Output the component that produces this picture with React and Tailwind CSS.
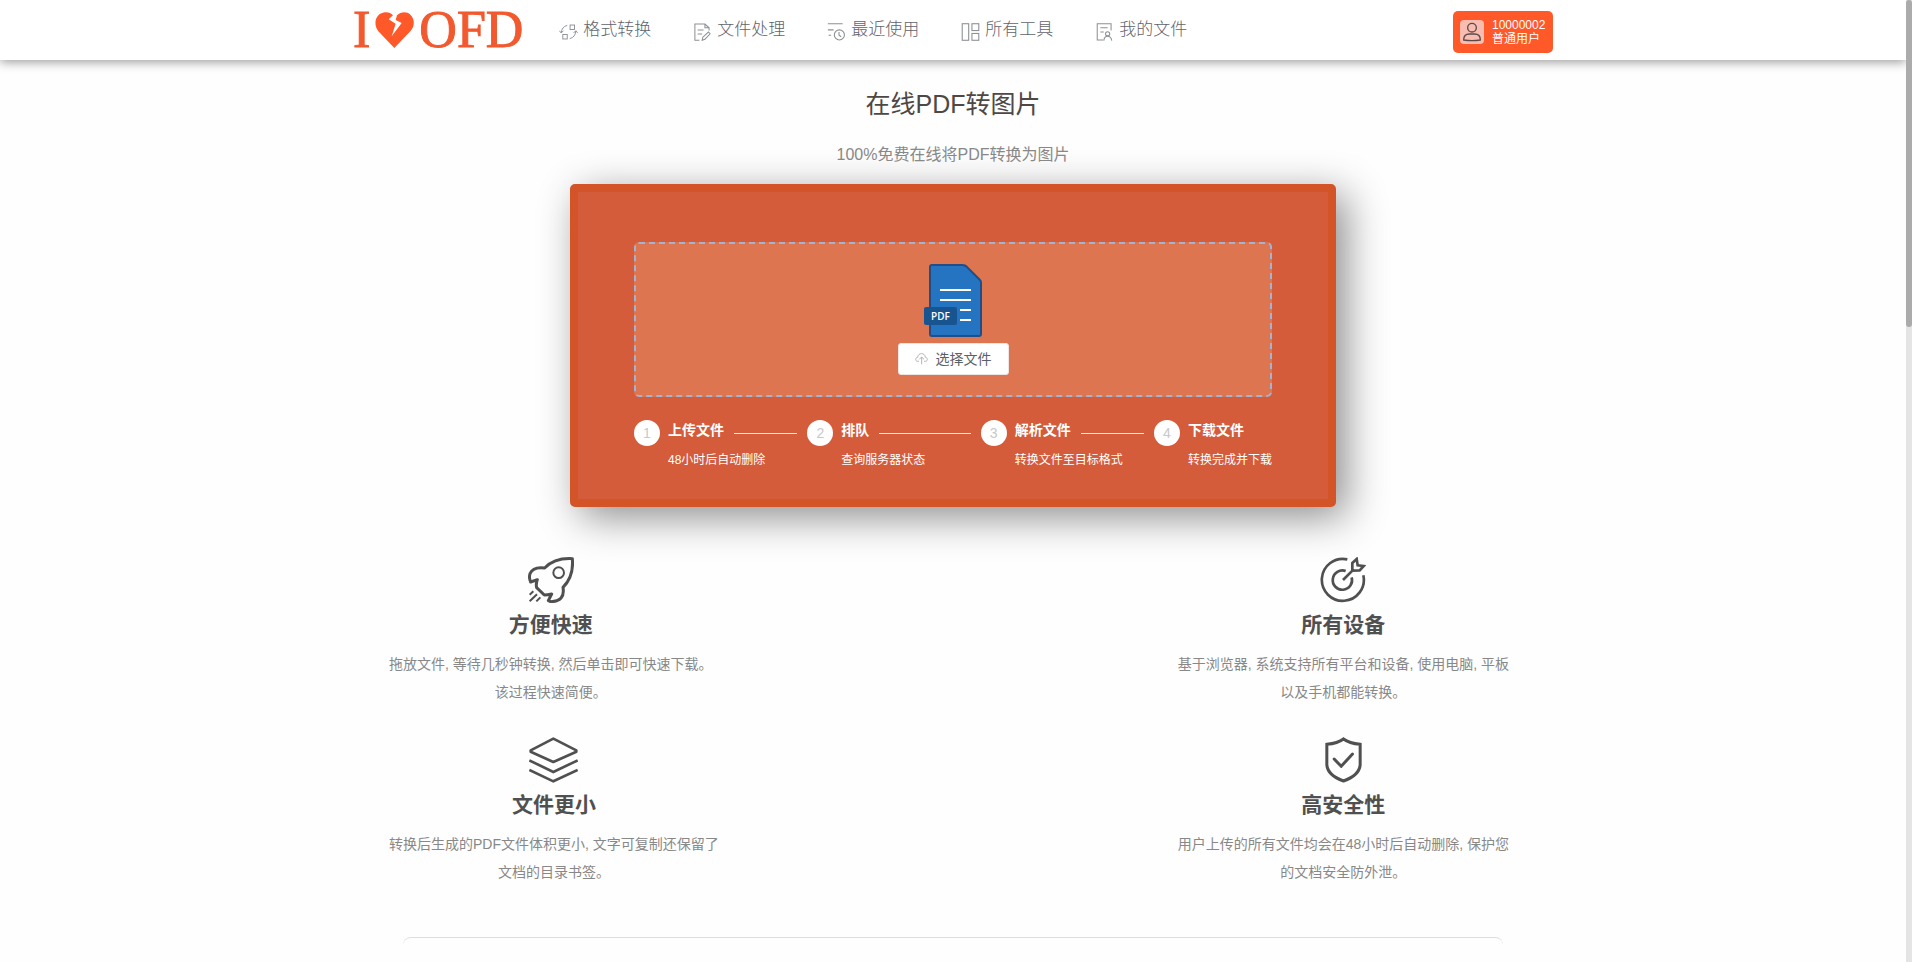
import React from 'react';

const navItems = [
  {
    label: '格式转换',
    viewBox: '-2 0 60 50',
    icon: (
      <>
        <rect x="33" y="3" width="14" height="14" />
        <rect x="10" y="33" width="14" height="14" />
        <path d="M24 4 Q6 9 5 28 M-1 21 L5 28 L12 21" />
        <path d="M32 46 Q50 41 51 22 M44 28 L51 21 L57 28" />
      </>
    ),
  },
  {
    label: '文件处理',
    viewBox: '0 0 50 52',
    icon: (
      <>
        <path d="M16 50 H3 V3 H32 L44 14 V22 M32 3 V14 H44" />
        <path d="M11 20 H28 M11 32 H24" />
        <path d="M24 50 L26 41 L42 26 L47 31 L32 47 Z" />
      </>
    ),
  },
  {
    label: '最近使用',
    viewBox: '0 0 50 50',
    icon: (
      <>
        <path d="M1 2 H42 M1 19 H17 M3 34 H10" />
        <circle cx="33" cy="33" r="14" />
        <path d="M32 25 V34 L38 38" />
      </>
    ),
  },
  {
    label: '所有工具',
    viewBox: '0 0 50 50',
    icon: (
      <>
        <rect x="2" y="2" width="18" height="46" />
        <rect x="29" y="2" width="19" height="19" />
        <rect x="29" y="29" width="19" height="19" />
      </>
    ),
  },
  {
    label: '我的文件',
    viewBox: '-2 0 50 52',
    icon: (
      <>
        <path d="M19 49 H2 V2 H42 V22" />
        <path d="M11 14 H32 M11 26 H21" />
        <circle cx="32" cy="31" r="6" />
        <path d="M21 51 Q22 38 32 38 Q42 38 44 51" />
      </>
    ),
  },
];

const steps = [
  { title: '上传文件', desc: '48小时后自动删除' },
  { title: '排队', desc: '查询服务器状态' },
  { title: '解析文件', desc: '转换文件至目标格式' },
  { title: '下载文件', desc: '转换完成并下载' },
];

const RocketIcon = () => (
  <svg className="h-[46px] w-[46px]" viewBox="0 0 138 138" fill="none" stroke="currentColor" strokeWidth="9">
    <path
      strokeLinejoin="round"
      d="M50 33 Q80 2 133 5 Q138 58 105 91 Q112 134 68 134 L61 131 L71 111 Q58 114 49 114 L26 92 Q23 80 28 68 L8 75 Q2 62 6 50 Q16 28 50 33 Z"
    />
    <circle cx="92" cy="47" r="16" strokeWidth="6" />
    <path strokeWidth="6" d="M16 103 L5 113 M27 112 L5 133 M37 121 L25 133" />
  </svg>
);

const LayersIcon = () => (
  <svg className="h-[46px] w-[49px]" viewBox="0 0 147 138" fill="none" stroke="currentColor" strokeWidth="8">
    <path strokeLinejoin="round" d="M73 5 L142 40 V44 L73 75 L5 44 V40 Z" />
    <path d="M1 70 L73 105 L146 70 M1 99 L73 133 L146 99" />
  </svg>
);

const TargetIcon = () => (
  <svg className="h-[46px] w-[46px]" viewBox="0 0 138 138" fill="none" stroke="currentColor" strokeWidth="8">
    <path d="M82 7 A63 63 0 1 0 130 55" />
    <path d="M77 42 A29 29 0 1 0 95 61" />
    <path d="M69 69 L101 37" />
    <path d="M97 18 L110 6 L113 25 L131 27 L119 40 L97 41 Z" />
  </svg>
);

const ShieldIcon = () => (
  <svg className="h-[46px] w-[37px]" viewBox="0 0 110 138" fill="none" stroke="currentColor" strokeWidth="9">
    <path d="M55 6 Q38 19 5 22 V84 Q8 115 55 132 Q102 115 105 84 V22 Q72 19 55 6 Z" />
    <path strokeLinecap="round" strokeLinejoin="round" d="M27 66 L48 88 L82 51" />
  </svg>
);

const leftFeatures = [
  {
    title: '方便快速',
    Icon: RocketIcon,
    lines: ['拖放文件, 等待几秒钟转换, 然后单击即可快速下载。', '该过程快速简便。'],
  },
  {
    title: '文件更小',
    Icon: LayersIcon,
    lines: ['转换后生成的PDF文件体积更小, 文字可复制还保留了', '文档的目录书签。'],
  },
];

const rightFeatures = [
  {
    title: '所有设备',
    Icon: TargetIcon,
    lines: ['基于浏览器, 系统支持所有平台和设备, 使用电脑, 平板', '以及手机都能转换。'],
  },
  {
    title: '高安全性',
    Icon: ShieldIcon,
    lines: ['用户上传的所有文件均会在48小时后自动删除, 保护您', '的文档安全防外泄。'],
  },
];

function Header() {
  return (
    <header className="relative z-10 bg-white shadow-[0_2px_10px_rgba(0,0,0,0.4)]">
      <div className="mx-auto flex h-[60px] max-w-[1200px] items-center">
        <a
          href="#home"
          aria-label="I love OFD"
          className="flex items-center font-['Liberation_Serif',serif] text-[52px] leading-[60px] text-[#f2592f] [-webkit-text-stroke:1px_#f2592f]"
        >
          I
          <svg className="mx-[5px] h-9 w-[39px]" viewBox="0 0 117 108" fill="#ff5829" stroke="none">
            <path d="M58 108 L10 58 C-6 38 0 4 30 1 C40 0 48 4 54 10 L41 22 L62 35 L50 73 L80 33 L62 24 L66 10 C78 -2 96 -2 106 8 C120 22 120 42 106 58 Z" />
          </svg>
          OFD
        </a>
        <nav className="ml-9 flex gap-[42px]">
          {navItems.map((item) => (
            <a key={item.label} href="#nav" className="flex items-center gap-[5px] text-[17px] leading-6 font-light text-[#5f646c]">
              <svg className="mt-1 h-[18px] w-[19px] text-[#8d9094]" viewBox={item.viewBox} fill="none" stroke="currentColor" strokeWidth="3">
                {item.icon}
              </svg>
              {item.label}
            </a>
          ))}
        </nav>
        <button className="mb-[-4px] ml-auto flex h-[42px] w-[100px] items-center gap-2 rounded-[5px] bg-[#ff5829] pl-[7px] text-left text-xs leading-[14px] text-white">
          <span className="rounded bg-[#f8bcb0] p-[2px]">
            <svg className="h-5 w-5 text-[#5c4a48]" viewBox="0 0 60 60" fill="none" stroke="currentColor" strokeWidth="4">
              <circle cx="30" cy="17" r="13" />
              <path d="M5 54 Q5 36 22 36 H38 Q55 36 55 54 Q30 58 5 54 Z" />
            </svg>
          </span>
          <span>
            10000002
            <br />
            普通用户
          </span>
        </button>
      </div>
    </header>
  );
}

function UploadCard() {
  return (
    <section className="mx-auto mt-[17px] max-w-[766px] rounded-[5px] border-8 border-[#d35427] bg-[#d45c3a] px-14 pt-[50px] pb-[29px] shadow-[10px_10px_40px_rgba(0,0,0,0.45)]">
      <div className="flex flex-col items-center rounded-[5px] border-2 border-dashed border-[#a0b4d6] bg-[#dd7650] py-5">
        <svg className="h-[73px] w-[58px]" viewBox="0 0 58 73">
          <path
            d="M8 1 H38 Q40 1 42 2 L56 16 Q57 17 57 19 V70 Q57 72 55 72 H8 Q6 72 6 70 V3 Q6 1 8 1 Z"
            fill="#2574c2"
            stroke="#1f4f86"
            strokeWidth="2"
          />
          <path d="M16 26 H47 M16 36 H47 M36 46 H47 M36 56 H47" stroke="#fff" strokeWidth="2" />
          <rect x="0" y="43" width="33" height="18" rx="2" fill="#18548f" />
          <text x="7" y="56" fill="#fff" fontSize="10" fontWeight="600" fontFamily="Open Sans, sans-serif">
            PDF
          </text>
        </svg>
        <button className="mt-[6px] flex h-8 items-center gap-2 rounded-[3px] border border-[#eee5e2] bg-white px-4 text-sm text-[#5b5f66]">
          <svg className="h-3 w-[13px] text-[#b3b5b8]" viewBox="0 0 39 36" fill="none" stroke="currentColor" strokeWidth="3">
            <path d="M12 25 H8 C0 25 0 13 8 13 C9 -2 30 -2 31 13 C39 13 39 25 31 25 H27" />
            <path d="M20 34 V12 M13 19 L20 12 L27 19" />
          </svg>
          选择文件
        </button>
      </div>

      <ol className="mt-[23px] flex text-white">
        {steps.map((step, idx) => {
          const isLast = idx === steps.length - 1;
          return (
            <li key={step.title} className={isLast ? 'flex gap-2' : 'flex min-w-0 flex-1 gap-2'}>
              <span className="flex h-[26px] w-[26px] shrink-0 items-center justify-center rounded-full bg-white text-sm text-[#c8c8c8]">
                {idx + 1}
              </span>
              <div className="flex-1">
                <div className="flex h-[26px] items-center">
                  <h3 className="self-start text-sm leading-5 font-bold">{step.title}</h3>
                  {!isLast && <span className="mx-[10px] h-px flex-1 bg-[#fbe9e3]" />}
                </div>
                <p className="mt-1 text-xs leading-5 whitespace-nowrap">{step.desc}</p>
              </div>
            </li>
          );
        })}
      </ol>
    </section>
  );
}

function FeatureColumn({ items }) {
  return (
    <div className="flex flex-col items-start gap-[31px]">
      {items.map(({ title, Icon, lines }) => (
        <div key={title} className="flex flex-col items-center text-center">
          <Icon />
          <h2 className="mt-2 text-[21px] leading-7 font-bold">{title}</h2>
          <p className="mt-[11px] text-sm leading-7 text-[#888]">
            {lines[0]}
            <br />
            {lines[1]}
          </p>
        </div>
      ))}
    </div>
  );
}

function App() {
  return (
    <div className="flex h-screen overflow-hidden bg-[#fefefe] font-['Liberation_Sans','Noto_Sans_CJK_SC',sans-serif] text-[#505050]">
      <div className="min-w-0 flex-1 overflow-hidden">
        <Header />
        <main>
          <h1 className="pt-6 text-center text-[25px] leading-10 text-[#4e4845]">在线PDF转图片</h1>
          <p className="mt-[19px] text-center text-base leading-6 text-[#888]">100%免费在线将PDF转换为图片</p>
          <UploadCard />

          <section className="mx-auto mt-[50px] flex max-w-[1128px] justify-between pr-2">
            <FeatureColumn items={leftFeatures} />
            <FeatureColumn items={rightFeatures} />
          </section>

          <section className="mx-auto mt-[51px] h-40 max-w-[1100px] rounded-lg border-t border-[#ddd]" />
        </main>
      </div>

      {/* scroll bar */}
      <div className="w-[6px] shrink-0 bg-[#e4e4e4]">
        <div className="h-[34%] rounded-[3px] bg-[#ababab]" />
      </div>
    </div>
  );
}

export default App;
